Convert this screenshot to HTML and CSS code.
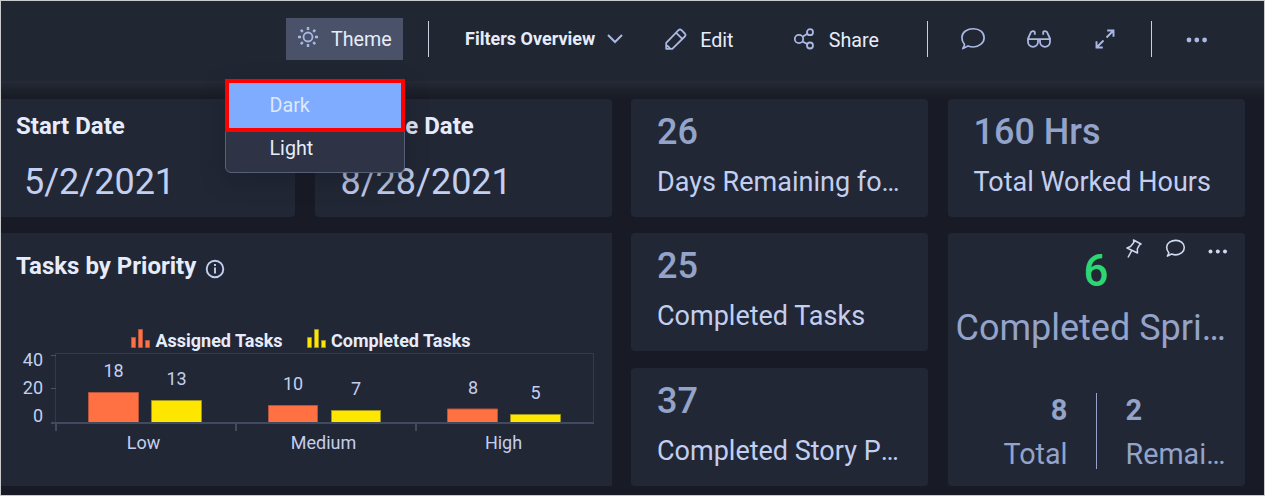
FILE: index.html
```html
<!DOCTYPE html>
<html lang="en">
<head>
<meta charset="utf-8">
<title>Dashboard</title>
<link rel="stylesheet" href="styles.css">
</head>
<body>
<div class="frame">
  <header class="toolbar">
    <button class="tool theme">
      <svg width="22" height="22" viewBox="0 0 22 22" fill="none" stroke="currentColor" stroke-width="1.8"><circle cx="11" cy="11" r="4.5"/><path stroke-width="2.4" d="M11 1v3M11 18v3M1 11h3M18 11h3M3.800 3.800l2 2M16.200 16.200l2 2M3.800 18.200l2-2M16.200 5.800l2-2"/></svg>
      <span>Theme</span>
    </button>
    <i class="rule rule-a"></i>
    <button class="tool filters"><span>Filters Overview</span>
      <svg width="16" height="10" viewBox="0 0 16 10" fill="none" stroke="currentColor" stroke-width="2"><path d="M1 1l7 7 7-7"/></svg>
    </button>
    <button class="tool edit">
      <svg width="22" height="22" viewBox="0 0 22 22" fill="none" stroke="currentColor" stroke-width="1.8" stroke-linejoin="round"><path d="M1.200 20.800v-6L13.500 2.200q1.500-1.400 3 0l3.300 3.300q1.400 1.500 0 3L7.300 20.800zM11 4.700l6.500 6.500M1.200 16.500L5.500 20.800"/></svg>
      <span>Edit</span>
    </button>
    <button class="tool share">
      <svg width="20" height="22" viewBox="0 0 20 22" fill="none" stroke="currentColor" stroke-width="1.800"><circle cx="5" cy="11" r="4.200"/><circle cx="16" cy="4.200" r="3"/><circle cx="16" cy="17.500" r="3"/><path d="M8.600 8.800L13.400 5.800M8.400 13.500l5 2.600"/></svg>
      <span>Share</span>
    </button>
    <i class="rule rule-b"></i>
    <svg class="ico comment" width="26" height="24" viewBox="0 0 26 24" fill="none" stroke="currentColor" stroke-width="1.700" stroke-linejoin="round"><path d="M4.500 17.500C.8 13 1 7 5.500 4 10 1 17 1 21 4.200c4.200 3.500 4.100 9.600 0 13-3.600 2.900-8.600 3.400-13 1.800L2.800 21.600C3.500 20 4.400 19 4.500 17.500z"/></svg>
    <svg class="ico glasses" width="24" height="18" viewBox="0 0 24 18" fill="none" stroke="currentColor" stroke-width="1.800"><path d="M1 9.200h10v2.600a5 5 0 0 1-10 0V8.500l3-6.500Q6.500.3 7.800 2V4.800M23 9.200H13v2.600a5 5 0 0 0 10 0V8.500L20 2Q17.500.3 16.200 2V4.800M11 9.200h2"/></svg>
    <svg class="ico expand" width="20" height="20" viewBox="0 0 20 20" fill="none" stroke="currentColor" stroke-width="1.900"><path d="M11.500 8.500L18.500 1.500M12.200 1.500h6.300v6.300M8.500 11.500L1.500 18.500M1.500 12.200v6.300h6.300"/></svg>
    <i class="rule rule-c"></i>
    <svg class="ico more" width="22" height="6" viewBox="0 0 22 6" fill="currentColor"><circle cx="3" cy="3" r="2.400"/><circle cx="10.800" cy="3" r="2.400"/><circle cx="18.600" cy="3" r="2.400"/></svg>
  </header>

  <main class="board">
    <section class="card date first"><h2>Start Date</h2><p>5/2/2021</p></section>
    <section class="card date due"><h2>Release Date</h2><p>8/28/2021</p></section>
    <section class="card kpi"><strong>26</strong><span>Days Remaining fo…</span></section>
    <section class="card kpi"><strong>160 Hrs</strong><span>Total Worked Hours</span></section>

    <section class="card tasks">
      <h2>Tasks by Priority
        <svg width="20" height="20" viewBox="0 0 20 20" fill="none" stroke="currentColor" stroke-width="1.900"><circle cx="10" cy="10" r="8.300"/><path d="M10 8.500v6M10 5v2"/></svg>
      </h2>
      <svg class="chart" width="611" height="166" viewBox="1 320 611 166">
        <g class="orange"><path d="M131.500 337.500h4v10h-4zM138.500 329.500h4v18h-4zM145.500 340.500h4v7h-4z"/></g>
        <g class="yellow"><path d="M307.500 337.500h4v10h-4zM314.500 329.500h4v18h-4zM321.500 340.500h4v7h-4z"/></g>
        <text class="legend" x="155.500" y="347" textLength="127">Assigned Tasks</text>
        <text class="legend" x="331" y="347" textLength="139.500">Completed Tasks</text>
        <path class="plot" d="M55.500 353.500h538v69M55.500 353.500v69"/>
        <path class="tick" d="M51 355.500h5M51 388.500h5"/>
        <g class="orange"><path d="M88.500 392.500h50v30h-50zM268.500 405.500h49v17h-49zM447.500 409h50v13.500h-50z"/></g>
        <g class="yellow"><path d="M151.500 400.500h50v22h-50zM331.500 410.500h49v12h-49zM510.500 414.500h50v8h-50z"/></g>
        <path class="axis" d="M51 423h543M56 423v8M236 423v8M416 423v8"/>
        <g class="lbl end"><text x="43" y="366">40</text><text x="43" y="394">20</text><text x="43" y="422">0</text></g>
        <g class="lbl mid"><text x="113.500" y="377">18</text><text x="176.500" y="385">13</text><text x="293" y="390">10</text><text x="356" y="395">7</text><text x="473" y="394">8</text><text x="535.500" y="399">5</text><text x="143.500" y="449">Low</text><text x="323.500" y="449">Medium</text><text x="503.500" y="449">High</text></g>
      </svg>
    </section>

    <section class="card kpi"><strong>25</strong><span>Completed Tasks</span></section>

    <section class="card sprint">
      <div class="actions">
        <svg width="18" height="20" viewBox="0 0 18 20" fill="none" stroke="currentColor" stroke-width="1.500" stroke-linejoin="round"><path d="M8.500 1l7.500 4-1.500.8-2.200 4 .2 4.200L2 9l3.500-1.500L8.800 3.500zM6.500 12L3 18.500"/></svg>
        <svg width="21" height="19" viewBox="0 0 26 24" fill="none" stroke="currentColor" stroke-width="2" stroke-linejoin="round"><path d="M4.500 17.500C.8 13 1 7 5.500 4 10 1 17 1 21 4.200c4.200 3.500 4.100 9.600 0 13-3.600 2.900-8.600 3.400-13 1.800L2.800 21.600C3.500 20 4.400 19 4.500 17.500z"/></svg>
        <svg class="dots" width="20" height="5" viewBox="0 0 20 5" fill="currentColor"><circle cx="2.500" cy="2.500" r="2"/><circle cx="9.800" cy="2.500" r="2"/><circle cx="17" cy="2.500" r="2"/></svg>
      </div>
      <b class="big">6</b>
      <p class="name">Completed Spri…</p>
      <div class="split">
        <div class="part total"><b>8</b><span>Total</span></div>
        <div class="part"><b>2</b><span>Remai…</span></div>
      </div>
    </section>

    <section class="card kpi"><strong>37</strong><span>Completed Story <span class="cut">P</span><span class="cut">…</span></span></section>
  </main>

  <ul class="menu"><li class="active">Dark</li><li>Light</li></ul>
</div>
</body>
</html>
```

FILE: styles.css
```css
* { box-sizing: border-box; }
body { margin: 0; background: #171a24; font-family: Roboto, "Liberation Sans", sans-serif; color: #e6ecfb; }
h2, p, ul { margin: 0; padding: 0; }
ul { list-style: none; }
.frame { position: relative; width: 1265px; height: 496px; border: 1px solid #c8cacb; background: #181b25; overflow: hidden; }

.toolbar { display: flex; align-items: center; height: 80px; padding: 0 0 4px 285px; background: #212633; color: #a9b9e3; }
.toolbar svg { flex: none; display: block; }
.tool { display: flex; align-items: center; padding: 0; border: 0; background: none; color: inherit; font: 400 19.700px/24px Roboto, sans-serif; white-space: nowrap; }
.tool span { color: #e6ecfb; }
.theme { width: 117px; height: 42px; padding: 0 0 0 11px; gap: 12px; background: #4a5269; }
.theme svg { margin-top: -4px; }
.theme span { padding-top: 2px; }
.rule { flex: none; width: 1px; height: 36px; background: #c9d0df; }
.rule-a { margin-left: 25px; }
.filters { margin-left: 36px; width: 158px; justify-content: space-between; font-size: 18px; font-weight: 700; }
.edit { margin: 0 0 0 42px; width: 68.500px; justify-content: space-between; }
.share { margin-left: 60.500px; width: 85px; justify-content: space-between; }
.edit span, .share span { padding-top: 4px; }
.edit svg, .share svg { margin-top: -1px; }
.rule-b { margin-left: 48px; }
.comment { margin-left: 32px; }
.glasses { margin-left: 41px; }
.expand { margin-left: 44px; }
.rule-c { margin-left: 36px; }
.more { margin-left: 34px; margin-top: 2px; }

.board {
  display: grid;
  grid-template-columns: 294px 297px 297px 297px;
  grid-template-rows: 118px 118px 118px;
  column-gap: 19.500px;
  row-gap: 16.400px;
  height: 414px;
  padding-top: 18px;
  background: linear-gradient(#262a36 0, #1d212c 9px, #181b25 18px) no-repeat 0 0 / 100% 18px;
}
.card { min-width: 0; border-radius: 4px; background: #222735; overflow: hidden; }
.first { border-radius: 0 4px 4px 0; }
.date { padding: 13px 0 0 15px; }
.date h2, .tasks h2 { font-size: 24px; line-height: 28px; font-weight: 700; white-space: nowrap; }
.date p { padding: 22px 0 0 8px; font-size: 36px; line-height: 40px; color: #c3cff0; }
.due { padding-left: 18px; }
.kpi { padding: 11px 0 0 26px; white-space: nowrap; }
.kpi strong { display: block; font-size: 36px; line-height: 44px; font-weight: 500; color: #93a3c9; }
.kpi > span { display: block; margin-top: 12px; font-size: 27px; line-height: 32px; color: #c3cff0; }
.kpi .cut { display: inline-block; }
.tasks { grid-column: 1 / 3; grid-row: 2 / 4; border-radius: 0; padding-top: 18.600px; }
.tasks h2 { display: flex; align-items: center; gap: 9px; height: 28px; padding-left: 15px; }
.tasks h2 svg { margin-top: 6px; color: #c3cff0; }
.chart { display: block; margin-top: 40px; font-family: Roboto, sans-serif; }
.orange path { fill: #ff7043; stroke: #b6553c; }
.yellow path { fill: #ffe600; stroke: #9f9420; }
.legend { fill: #e6ecfb; font-size: 18px; font-weight: 700; }
.lbl text { fill: #c3cff0; font-size: 18px; }
.end { text-anchor: end; }
.mid { text-anchor: middle; }
.plot, .tick, .axis { fill: none; }
.plot { stroke: #343a4a; }
.tick { stroke: #485168; }
.axis { stroke: #414b60; stroke-width: 2; }

.sprint { position: relative; grid-row: 2 / 4; grid-column: 4; text-align: center; color: #93a3c9; }
.actions { position: absolute; top: 5.600px; right: 17px; display: flex; align-items: flex-start; gap: 22px; color: #d0d9f1; }
.actions .dots { margin-top: 10px; }
.big { display: block; padding-top: 12px; font-size: 44px; line-height: 52px; font-weight: 500; color: #2bd673; }
.name { padding: 10px 0 0 8px; font-size: 36px; line-height: 42px; text-align: left; white-space: nowrap; }
.split { display: flex; margin-top: 44px; height: 76px; }
.part { flex: 1; padding: 0 0 0 29px; text-align: left; }
.part b, .part span { display: block; }
.part b { font-size: 29px; line-height: 34px; font-weight: 700; }
.part span { margin-top: 9px; font-size: 28.700px; line-height: 36px; }
.total { flex: none; width: 149px; padding: 0 28px 0 0; border-right: 1px solid #93a3c9; text-align: right; }

.menu { position: absolute; left: 224px; top: 78px; width: 180px; height: 94px; border: 1px solid #566078; border-radius: 0 0 6px 6px; background: #2e3445; box-shadow: 0 8px 22px rgba(20, 24, 34, .4); font-size: 19.700px; }
.menu li { height: 41px; padding-left: 43.500px; line-height: 33px; }
.menu .active { height: 53px; margin: -1px -1px 0; padding-left: 40.500px; border: 4px solid #f00; line-height: 46px; background: #80acff; color: #dfe8fc; }
```
